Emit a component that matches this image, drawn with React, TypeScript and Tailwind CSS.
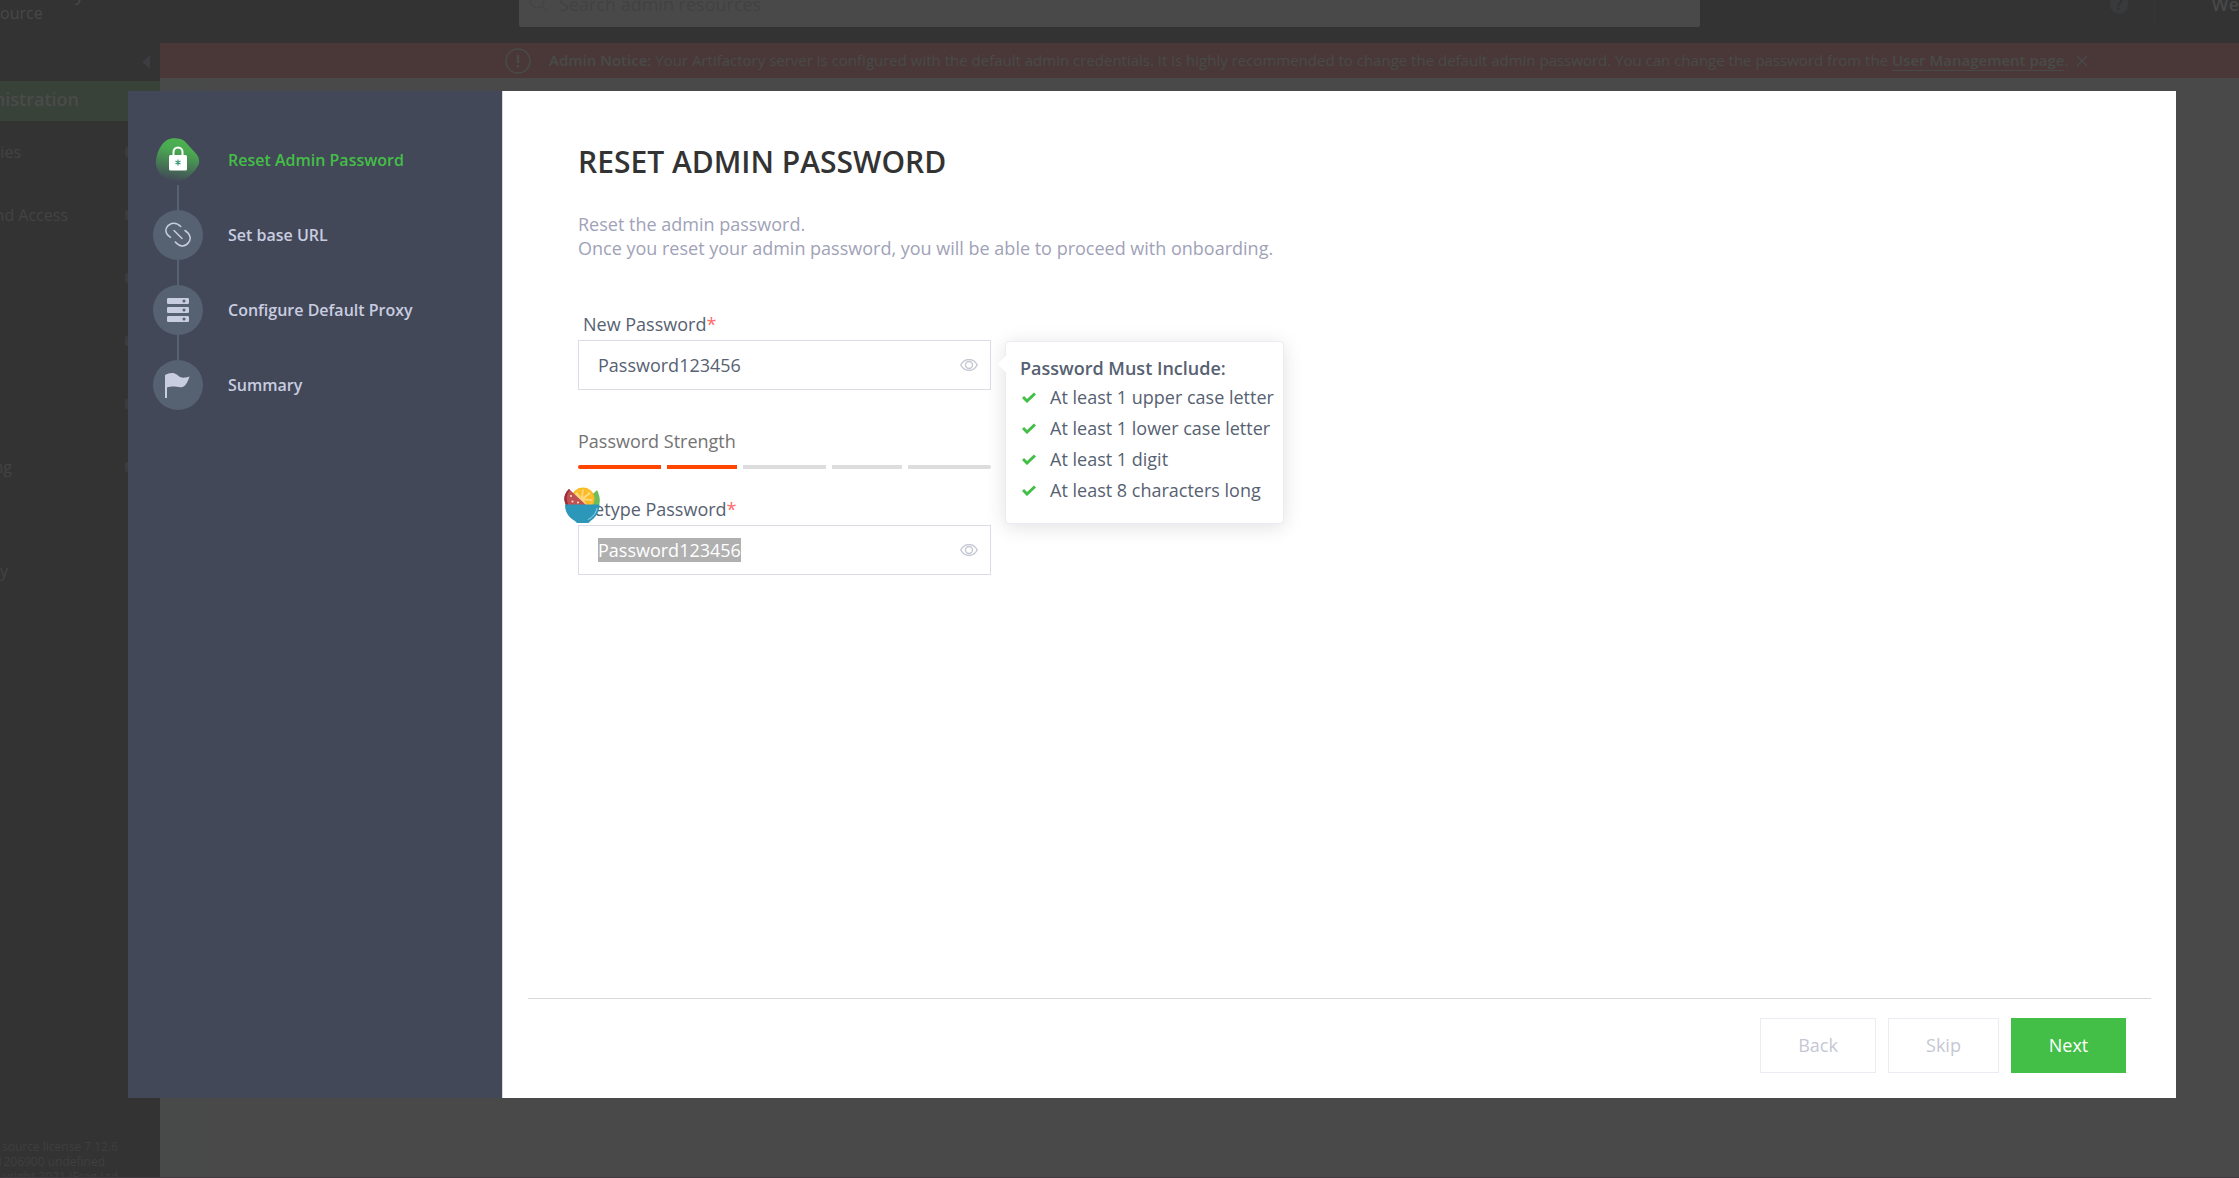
import { useEffect, useRef } from "react";
import type { ReactNode, Ref } from "react";

function LockIcon() {
  return (
    <svg width="46" height="46" viewBox="0 0 46 46" aria-hidden="true">
      <defs>
        <linearGradient id="blob" x1="0.62" y1="0" x2="0.42" y2="1">
          <stop offset="0" stopColor="#4cb450" />
          <stop offset="0.3" stopColor="#4aa752" />
          <stop offset="1" stopColor="#434858" />
        </linearGradient>
      </defs>
      <path
        d="M13 2.500C18 .5 26 .8 30 4.500L40 15.500C46 22 45 27 41 32C37 37 32 43 23 44.500C12 44.500 4 40 1 28C0 20 5 6 13 2.500Z"
        fill="url(#blob)"
      />
      <path d="M18.500 19v-4a4.500 4.500 0 0 1 9 0V19" fill="none" stroke="#fff" strokeWidth="2" />
      <rect x="14" y="18" width="18" height="15.500" rx="1.500" fill="#fff" />
      <path d="M23 22.500v6M20.500 24l5 3M25.500 24l-5 3" stroke="#3f9a78" strokeWidth="1.200" />
    </svg>
  );
}

function LinkIcon() {
  return (
    <svg width="26" height="26" viewBox="0 0 26 26" fill="none" stroke="#c9cde0" strokeWidth="1.500" strokeLinecap="round" aria-hidden="true">
      <path d="M15.700 4.500C13 1.500 10 .6 6.500 1.500C1.500 3.500-.5 8 2 12C3 13.500 4.500 14.500 5.500 15.300" />
      <path d="M20 8.500C25.500 12 26.500 17 23.500 20.500C20 25.500 14.500 25 10.300 20" />
      <path d="M9 8.500l8 8" />
    </svg>
  );
}

function ServerIcon() {
  return (
    <svg width="22" height="24" viewBox="0 0 22 24" fill="#c9cde0" aria-hidden="true">
      {[0, 9, 18].map((y) => (
        <g key={y}>
          <rect x="0" y={y} width="22" height="6" rx="1.200" />
          <circle cx="17" cy={y + 3} r="1.500" fill="#566172" />
        </g>
      ))}
    </svg>
  );
}

function FlagIcon() {
  return (
    <svg width="26" height="26" viewBox="0 0 26 26" fill="#c9cde0" aria-hidden="true">
      <path d="M0 3C4 .5 9 0 12.500 3c3 3 6 3.500 12 1.500C23 9 21 14 17.500 15c-5 1-8-2-15.500.5V26H0Z" />
    </svg>
  );
}

function EyeIcon() {
  return (
    <svg width="18" height="12" viewBox="0 0 18 12" fill="none" stroke="#c5c8d3" strokeWidth="1.400" aria-hidden="true">
      <path d="M.8 6C4.500-1.200 13.500-1.200 17.200 6C13.500 13.200 4.500 13.200.8 6Z" />
      <circle cx="9" cy="6" r="3.500" />
    </svg>
  );
}

function Bowl() {
  return (
    <svg width="36" height="36" viewBox="0 0 36 36" aria-hidden="true">
      <path d="M26 8c3-1 5-3 7-5c2 4 4 10 2 15h-8Z" fill="#6cbd5b" />
      <circle cx="19" cy="12" r="11.500" fill="#fbb922" />
      <circle cx="19" cy="12" r="9.500" fill="#fdd778" />
      <g fill="#fbb922">
        <path d="M17 10l-4-5c2-1 3-2 5-2ZM19 10l1-7c2 0 4 1 5 2ZM21 11.500l5.500-4.500c1 2 1.500 3 1.500 5ZM20 13.500l8 .5-2 4h-3Z" />
      </g>
      <path d="M5 2L22 18H2C-1 12 0 7 5 2Z" fill="#bf5056" />
      <path d="M5 2C0 7-1 12 2 18h2.500C2 12 2 8 6 3Z" fill="#9b2f35" />
      <g fill="#fcdcae">
        <circle cx="7" cy="9" r="1.100" />
        <circle cx="8.500" cy="14.500" r="1.100" />
        <circle cx="14" cy="15.500" r="1.100" />
      </g>
      <path d="M1 17.500h34.500c0 7-3.500 13-9 16.500l-2 2H13l-2-2C4.500 30.500 1 25 1 17.500Z" fill="#2c97b9" />
      <path d="M33 21c-1 5-4 9-9 11.500" fill="none" stroke="#9fd4e6" strokeWidth="1" />
    </svg>
  );
}

const steps: { label: string; icon: ReactNode; active?: boolean }[] = [
  { label: "Reset Admin Password", icon: <LockIcon />, active: true },
  { label: "Set base URL", icon: <LinkIcon /> },
  { label: "Configure Default Proxy", icon: <ServerIcon /> },
  { label: "Summary", icon: <FlagIcon /> },
];

function Steps() {
  return (
    <ol className="flex w-[374px] shrink-0 flex-col bg-[#434858] pl-[25px] pt-11 text-base">
      {steps.map((s, i) => (
        <li key={s.label}>
          {i > 0 && <div className="ml-6 h-[25px] w-0.5 bg-[#566172]" />}
          <div className="flex items-center gap-[25px]">
            <span
              className={
                s.active
                  ? "flex size-[50px] items-center justify-center"
                  : "flex size-[50px] items-center justify-center rounded-full bg-[#566172]"
              }
            >
              {s.icon}
            </span>
            <span className={s.active ? "font-semibold text-[#43bf47]" : "font-semibold text-[#c9cde0]"}>{s.label}</span>
          </div>
        </li>
      ))}
    </ol>
  );
}

function PasswordField({ id, label, inputRef, children }: { id: string; label: string; inputRef?: Ref<HTMLInputElement>; children?: ReactNode }) {
  return (
    <div>
      <label htmlFor={id} className="block pb-0.5 pl-[5px] leading-7 text-[#566172]">
        {label}
        <span className="text-[#ff6a6a]">*</span>
      </label>
      <div className="relative">
        <input
          id={id}
          ref={inputRef}
          type="text"
          defaultValue="Password123456"
          className="block h-[50px] w-full border border-[#dcdce6] bg-white pl-[19px] pr-12 text-[#566172] outline-none selection:bg-[#b0b0b0] selection:text-white"
        />
        <button type="button" aria-label="Show password" className="absolute inset-y-0 right-[13px]">
          <EyeIcon />
        </button>
        {children}
      </div>
    </div>
  );
}

const rules = ["At least 1 upper case letter", "At least 1 lower case letter", "At least 1 digit", "At least 8 characters long"];

function Rules() {
  return (
    <div className="absolute left-full top-px ml-3.5 h-[183px] w-[279px] rounded border border-[#ebebf3] bg-white pl-3.5 pt-3 text-[#566172] shadow-[0_3px_20px_rgba(0,0,0,0.12)]">
      <span className="absolute -left-[6px] top-4 size-3 rotate-45 bg-white" />
      <p className="font-semibold leading-7">Password Must Include:</p>
      <ul>
        {rules.map((r) => (
          <li key={r} className="flex items-center gap-3.5 pl-0.5 leading-[31px] whitespace-nowrap">
            <svg width="14" height="11" viewBox="0 0 14 11" fill="none" stroke="#43bf47" strokeWidth="3" aria-hidden="true">
              <path d="M1 5l4 4L13 1.500" />
            </svg>
            {r}
          </li>
        ))}
      </ul>
    </div>
  );
}

function Strength() {
  return (
    <div className="pt-9">
      <p className="leading-[30px] text-[#737373]">Password Strength</p>
      <div className="mt-[9px] flex h-1 gap-1.5 overflow-hidden rounded-sm">
        <span className="w-[83px] bg-[#ff4500]" />
        <span className="w-[70px] bg-[#ff4500]" />
        <span className="w-[83px] bg-[#ddd]" />
        <span className="w-[70px] bg-[#ddd]" />
        <span className="w-[83px] bg-[#ddd]" />
      </div>
    </div>
  );
}

const navItems = [
  { text: "ries", width: "w-[21px]" },
  { text: "nd Access", width: "w-[68px]" },
  { text: "", width: "w-0" },
  { text: "", width: "w-0" },
  { text: "", width: "w-0" },
  { text: "ng", width: "w-3" },
];

function Backdrop() {
  return (
    <div className="flex h-full flex-col border-b border-[#433a3f] bg-[#494949] text-[#484848]">
      <header className="flex h-[43px] shrink-0 items-start bg-[#333]">
        <div className="w-[519px]">
          <p className="-mt-4 w-[84px] text-right leading-5">y</p>
          <p className="-mt-px w-10 text-right text-base leading-5">ource</p>
        </div>
        <div className="flex h-[27px] min-w-0 flex-1 items-start gap-2.5 rounded-b-xs bg-[#494949] pl-2.5 text-[#424242]">
          <svg width="20" height="20" viewBox="0 0 20 20" className="-mt-2" fill="none" stroke="currentColor" aria-hidden="true">
            <circle cx="8" cy="9" r="7" />
            <path d="M13 14l5 5" />
          </svg>
          <span className="-mt-2 leading-6">Search admin resources</span>
        </div>
        <div className="flex h-7 w-[539px] items-start">
          <span className="-mt-2 ml-[410px] size-[22px] rounded-full bg-[#393a3c] text-center text-base leading-6 font-semibold text-[#303030]">?</span>
          <span className="ml-[26px] h-7 w-px bg-[#363636]" />
          <span className="-mt-2 ml-[57px] font-semibold leading-6">We</span>
        </div>
      </header>
      <div className="flex min-h-0 flex-1">
        <nav className="flex w-40 shrink-0 flex-col bg-[#333] text-base leading-6 whitespace-nowrap text-[#434343]">
          <div className="flex h-[38px] items-center justify-end pr-2.5 text-[#3c3d40]">
            <svg width="8" height="14" viewBox="0 0 8 14" fill="currentColor" aria-hidden="true">
              <path d="M8 0v14L0 7Z" />
            </svg>
          </div>
          <div className="flex h-10 items-center bg-[#384238] pb-1 text-lg font-semibold text-[#4a4b4a]">
            <span className="flex w-[79px] justify-end">nistration</span>
          </div>
          <ul className="flex flex-col gap-[39px] pt-[19px]">
            {navItems.map((n, i) => (
              <li key={i} className="flex h-6 items-center justify-between pr-[25px]">
                <span className={`flex justify-end ${n.width}`}>{n.text}</span>
                <span className="size-2.5 rounded-xs bg-[#3b3c3f]" />
              </li>
            ))}
          </ul>
          <p className="mt-20 flex w-2 justify-end">y</p>
          <div className="mt-auto h-[38px] overflow-hidden text-xs leading-[15px] text-[#3f3f3f]">
            <p className="flex w-[118px] justify-end">n source license 7.12.6</p>
            <p className="flex w-[105px] justify-end">71206900 undefined</p>
            <p className="flex w-[118px] justify-end">yright 2021 JFrog Ltd</p>
          </div>
        </nav>
        <main className="flex min-w-0 flex-1 flex-col">
          <div className="flex h-[35px] shrink-0 items-center bg-[#4a3838] pl-[345px] text-[15px] whitespace-nowrap text-[#484b49]">
            <svg width="26" height="26" viewBox="0 0 26 26" fill="none" stroke="currentColor" strokeWidth="1.500" aria-hidden="true">
              <circle cx="13" cy="13" r="12" />
              <path d="M13 7v8M13 17v2.500" strokeWidth="2.500" />
            </svg>
            <p className="ml-[18px]">
              <b className="font-semibold">Admin Notice:</b> Your Artifactory server is configured with the default admin credentials. It is highly recommended to change the default admin password. You can change the password from the{" "}
              <a href="#users" className="border-b border-current font-semibold">User Management page</a>.
            </p>
            <button type="button" aria-label="Dismiss" className="ml-2">
              <svg width="12" height="12" viewBox="0 0 12 12" stroke="currentColor" strokeWidth="1.200" aria-hidden="true">
                <path d="M1 1l10 10M11 1L1 11" />
              </svg>
            </button>
          </div>
          <div className="w-11 flex-1 bg-[#474a48]" />
        </main>
      </div>
    </div>
  );
}

export default function App() {
  const retype = useRef<HTMLInputElement>(null);
  useEffect(() => {
    retype.current?.focus();
    retype.current?.select();
  }, []);
  return (
    <div className="relative h-screen overflow-hidden font-['Open_Sans',sans-serif] text-lg">
      <Backdrop />
      <div className="absolute inset-0 flex pt-[91px] pr-[63px] pb-20 pl-32">
        <div role="dialog" aria-labelledby="title" className="flex min-w-0 flex-1 bg-white">
          <Steps />
          <section className="flex min-w-0 flex-1 flex-col border-l border-[#d8d9dd]">
            <div className="flex-1 pl-[75px] pt-[51px]">
              <h1 id="title" className="text-3xl leading-10 font-semibold text-[#333]">RESET ADMIN PASSWORD</h1>
              <p className="mt-[30px] leading-6 text-[#9fa2b8]">
                Reset the admin password.
                <br />
                Once you reset your admin password, you will be able to proceed with onboarding.
              </p>
              <form className="mt-[50px] w-[413px]">
                <PasswordField id="new-password" label="New Password">
                  <Rules />
                </PasswordField>
                <Strength />
                <div className="relative mt-[26px]">
                  <PasswordField id="retype-password" label="Retype Password" inputRef={retype} />
                  <span className="absolute -left-3.5 -top-2">
                    <Bowl />
                  </span>
                </div>
              </form>
            </div>
            <footer className="mx-[25px] flex h-[100px] justify-end gap-3 border-t border-[#d9d9d9] pt-[19px] pr-[25px]">
              <button type="button" disabled className="h-[55px] w-[116px] border border-[#ebebf3] pb-0.5 text-[#c5c8d3]">Back</button>
              <button type="button" disabled className="h-[55px] w-[111px] border border-[#ebebf3] pb-0.5 text-[#c5c8d3]">Skip</button>
              <button type="button" className="h-[55px] w-[115px] bg-[#43bf47] pb-0.5 text-white">Next</button>
            </footer>
          </section>
        </div>
      </div>
    </div>
  );
}
